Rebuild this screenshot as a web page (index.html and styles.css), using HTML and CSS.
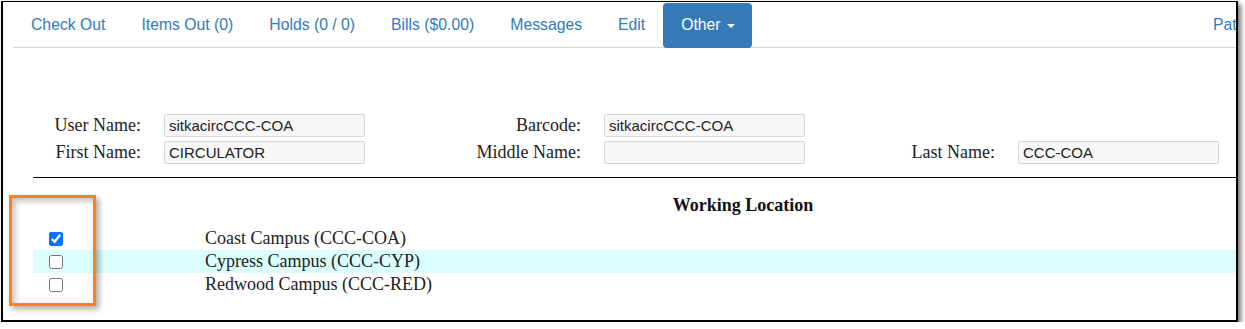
FILE: index.html
```html
<!DOCTYPE html>
<html>
<head>
<meta charset="utf-8">
<link rel="stylesheet" href="styles.css">
</head>
<body>
<div class="frame">
  <ul class="tabs">
    <li><a class="tab">Check Out</a></li>
    <li><a class="tab">Items Out (0)</a></li>
    <li><a class="tab">Holds (0 / 0)</a></li>
    <li><a class="tab">Bills ($0.00)</a></li>
    <li><a class="tab">Messages</a></li>
    <li><a class="tab">Edit</a></li>
    <li><a class="tab active">Other <span class="caret"></span></a></li>
    <li class="right"><a class="tab">Patron Search</a></li>
  </ul>

  <div class="form">
    <label class="lbl">User Name:</label>
    <div class="field">sitkacircCCC-COA</div>
    <label class="lbl">Barcode:</label>
    <div class="field">sitkacircCCC-COA</div>
    <span></span><span></span>

    <label class="lbl">First Name:</label>
    <div class="field">CIRCULATOR</div>
    <label class="lbl">Middle Name:</label>
    <div class="field"></div>
    <label class="lbl">Last Name:</label>
    <div class="field">CCC-COA</div>
  </div>

  <div class="locations">
    <div class="loc-head">Working Location</div>
    <div class="loc-row">
      <span class="cb"><input type="checkbox" checked></span>
      <span class="loc-name">Coast Campus (CCC-COA)</span>
    </div>
    <div class="loc-row alt">
      <span class="cb"><input type="checkbox"></span>
      <span class="loc-name">Cypress Campus (CCC-CYP)</span>
    </div>
    <div class="loc-row">
      <span class="cb"><input type="checkbox"></span>
      <span class="loc-name">Redwood Campus (CCC-RED)</span>
    </div>
  </div>

  <div class="callout"></div>
</div>
</body>
</html>
```

FILE: styles.css
```css
html, body {
  margin: 0;
  padding: 0;
  background: #ffffff;
}

body {
  padding: 1px 0 0 1px;
  font-family: "Liberation Serif", "Times New Roman", serif;
}

.frame {
  position: relative;
  box-sizing: border-box;
  width: 1237px;
  height: 321px;
  border: 2px solid #000;
  border-top-width: 1px;
  background: #fff;
  box-shadow: 3px 3px 5px rgba(0, 0, 0, 0.55);
  overflow: hidden;
}

/* nav tabs */
.tabs {
  list-style: none;
  margin: 1px 0 0 10px;
  padding: 0;
  display: flex;
  border-bottom: 1px solid #d4d4d4;
  width: 1300px;
  font-family: "Liberation Sans", Arial, sans-serif;
  font-size: 15.75px;
}

.tabs li {
  display: block;
  margin-bottom: -1px;
}

.tab {
  display: block;
  padding: 11px 18px 13px;
  line-height: 21px;
  color: #337ab7;
  border-radius: 4px;
  white-space: nowrap;
}

.tab.active {
  background: #337ab7;
  color: #fff;
  padding-right: 17px;
}

.caret {
  display: inline-block;
  width: 0;
  height: 0;
  margin-left: 2px;
  vertical-align: middle;
  border-top: 4px solid #fff;
  border-left: 4px solid transparent;
  border-right: 4px solid transparent;
}

.tabs .right {
  margin-left: 443px;
}

/* form */
.form {
  display: grid;
  grid-template-columns: 139px 201px 239px 201px 213px 201px;
  row-gap: 4px;
  margin: 66px 0 0 22px;
  align-items: center;
}

.lbl {
  text-align: right;
  padding-right: 23px;
  font-size: 18px;
  color: #222;
  line-height: 23px;
}

.field {
  box-sizing: border-box;
  height: 23px;
  border: 1px solid #d6d6d6;
  border-radius: 2px;
  background: #f7f7f7;
  padding: 0 4px;
  font-family: "Liberation Sans", Arial, sans-serif;
  font-size: 15px;
  line-height: 21px;
  color: #222;
}

/* working location */
.locations {
  margin: 13px 0 0 30px;
  border-top: 1px solid #000;
}

.loc-head {
  font-weight: bold;
  font-size: 18px;
  text-align: center;
  padding-left: 217px;
  padding-top: 16px;
  line-height: 22px;
  margin-bottom: 11px;
  color: #111;
}

.loc-row {
  display: flex;
  align-items: center;
  height: 23px;
}

.loc-row.alt {
  background: #dcfdfd;
}

.cb {
  width: 172px;
  display: flex;
  align-items: center;
  padding-left: 16px;
  box-sizing: border-box;
}

.cb input {
  width: 14px;
  height: 14px;
  margin: 0;
}

.loc-name {
  font-size: 18px;
  color: #222;
  line-height: 23px;
}

/* annotation */
.callout {
  position: absolute;
  left: 6px;
  top: 193px;
  width: 81px;
  height: 105px;
  border: 3px solid #fb8317;
  box-shadow: 3px 3px 6px rgba(0, 0, 0, 0.35), inset 3px 3px 6px rgba(0, 0, 0, 0.25);
}
```
